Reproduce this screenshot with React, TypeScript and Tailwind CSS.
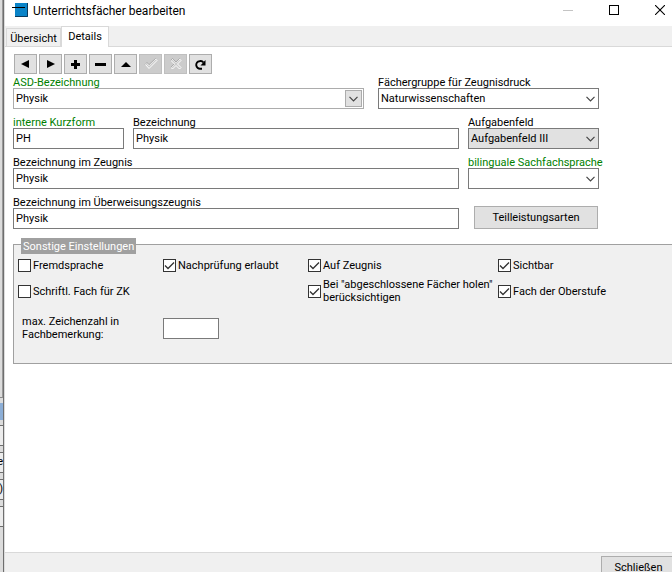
import type { ReactNode } from 'react'

const fieldClass =
  'h-[21px] w-full min-w-0 border border-[#7a7a7a] bg-white px-[2px] text-[11px] outline-none focus:border-[#0078d7]'

const buttonClass =
  'flex h-5 w-[23px] items-center justify-center border border-[#adadad] bg-[#e1e1e1] disabled:border-[#bfbfbf] disabled:bg-[#cccccc]'

function Field({
  id,
  label,
  green,
  className = '',
  children,
}: {
  id: string
  label: string
  green?: boolean
  className?: string
  children: ReactNode
}) {
  return (
    <div className={`flex min-w-0 flex-col ${className}`}>
      <label
        htmlFor={id}
        className={`h-[13px] whitespace-nowrap leading-[15px] ${green ? 'text-[#008000]' : ''}`}
      >
        {label}
      </label>
      {children}
    </div>
  )
}

function Chevron() {
  return (
    <svg width="9" height="6" viewBox="0 0 9 6" fill="none" stroke="#444" strokeWidth="1.2">
      <path d="M0.5 0.8 4.5 4.8 8.5 0.8" />
    </svg>
  )
}

function Combo({
  id,
  options,
  variant = 'plain',
}: {
  id: string
  options: string[]
  variant?: 'plain' | 'grey' | 'boxed'
}) {
  return (
    <div className="relative">
      <select
        id={id}
        className={`h-[21px] w-full appearance-none border px-[2px] pt-px text-[11px] outline-none ${
          variant === 'boxed' ? 'border-[#acacac]' : 'border-[#7a7a7a]'
        } ${variant === 'grey' ? 'bg-[#e1e1e1]' : 'bg-white'}`}
      >
        {options.map((o) => (
          <option key={o}>{o}</option>
        ))}
      </select>
      <span
        className={`pointer-events-none absolute flex items-center justify-center ${
          variant === 'boxed'
            ? 'inset-y-[2px] right-[2px] w-[17px] border border-[#acacac] bg-[#e1e1e1]'
            : 'inset-y-0 right-1 w-[9px]'
        }`}
      >
        <Chevron />
      </span>
    </div>
  )
}

function Check({ label, checked, className = '' }: { label: string; checked?: boolean; className?: string }) {
  return (
    <label className={`flex h-[26px] items-center gap-[2px] leading-[13px] ${className}`}>
      <span className="grid shrink-0">
        <input
          type="checkbox"
          defaultChecked={checked}
          className="peer col-start-1 row-start-1 size-[13px] appearance-none border border-[#333] bg-white"
        />
        <svg
          viewBox="0 0 13 13"
          fill="none"
          stroke="#333"
          strokeWidth="1.3"
          className="pointer-events-none invisible col-start-1 row-start-1 size-[13px] peer-checked:visible"
        >
          <path d="M2 6.5 5 9.5 11 3.5" />
        </svg>
      </span>
      <span className="whitespace-pre">{label}</span>
    </label>
  )
}

function TitleBar() {
  return (
    <header className="flex h-[26px] shrink-0 items-start bg-white pl-[7px]">
      <svg width="16" height="16" viewBox="0 0 16 16" className="mt-[2px]">
        <rect x="3" y="1" width="13" height="14" fill="#0a84c8" />
        <path d="M3 14.5h12.5V1" stroke="#0b3a5c" fill="none" />
        <path d="M0 5.5h13" stroke="#000" />
      </svg>
      <h1 className="ml-[5px] flex-1 text-[12px] leading-[22px]">Unterrichtsfächer bearbeiten</h1>
      <button type="button" aria-label="Minimieren" className="flex h-5 w-[46px] items-center justify-center">
        <svg width="10" height="10" viewBox="0 0 10 10">
          <path d="M0 5.5h10" stroke="#c4c4c4" />
        </svg>
      </button>
      <button type="button" aria-label="Maximieren" className="flex h-5 w-[46px] items-center justify-center">
        <svg width="10" height="10" viewBox="0 0 10 10">
          <rect x="0.5" y="0.5" width="9" height="9" fill="none" stroke="#000" />
        </svg>
      </button>
      <button type="button" aria-label="Schließen" className="-mr-[11px] flex h-5 w-[46px] items-center justify-center">
        <svg width="10" height="10" viewBox="0 0 10 10">
          <path d="M0 0 10 10M10 0 0 10" stroke="#000" strokeWidth="1.1" />
        </svg>
      </button>
    </header>
  )
}

function Toolbar() {
  return (
    <div className="flex gap-[2px] pl-px">
      <button type="button" aria-label="Zurück" className={buttonClass}>
        <svg width="9" height="8" viewBox="0 0 9 8">
          <path d="M0 4 8 0v8z" />
        </svg>
      </button>
      <button type="button" aria-label="Weiter" className={buttonClass}>
        <svg width="9" height="8" viewBox="0 0 9 8">
          <path d="M9 4 1 0v8z" />
        </svg>
      </button>
      <button type="button" aria-label="Hinzufügen" className={buttonClass}>
        <svg width="9" height="9" viewBox="0 0 9 9">
          <path d="M3 0h3v3h3v3H6v3H3V6H0V3h3z" />
        </svg>
      </button>
      <button type="button" aria-label="Löschen" className={buttonClass}>
        <svg width="11" height="3" viewBox="0 0 11 3">
          <path d="M0 0h11v3H0z" />
        </svg>
      </button>
      <button type="button" aria-label="Bearbeiten" className={buttonClass}>
        <svg width="10" height="5" viewBox="0 0 10 5">
          <path d="M0 5 5 0l5 5z" />
        </svg>
      </button>
      <button type="button" aria-label="Speichern" disabled className={buttonClass}>
        <svg width="14" height="12" viewBox="0 0 14 12" fill="none">
          <path d="m1.5 6.5 3.5 4 8-8L11.500 1 5 7.500 2.500 5z" stroke="#fff" />
          <path d="M1 6.500 3 4.500l2 2.200L11.500 0.500" stroke="#9c9c9c" strokeWidth="0.8" />
        </svg>
      </button>
      <button type="button" aria-label="Abbrechen" disabled className={buttonClass}>
        <svg width="12" height="12" viewBox="0 0 12 12" fill="none">
          <path
            d="m1 2.500 1.500-1.500L6 4.500 9.500 1 11 2.500 7.500 6 11 9.500 9.500 11 6 7.500 2.500 11 1 9.500 4.500 6z"
            stroke="#fff"
          />
          <path d="M0.500 2.500 2.500 0.500 6 4l3.500-3.500M4 6 0.500 9.500" stroke="#9c9c9c" strokeWidth="0.8" />
        </svg>
      </button>
      <button type="button" aria-label="Aktualisieren" className={buttonClass}>
        <svg width="11" height="11" viewBox="0 0 11 11">
          <path
            d="M7 9.700H5.500A3.700 3.700 0 0 1 4.500 2.200C6 1.700 7.500 2.200 8.500 3.500"
            fill="none"
            stroke="#000"
            strokeWidth="1.9"
          />
          <path d="M10.500 1v5.500H5.500z" />
        </svg>
      </button>
    </div>
  )
}

// sliver of the parent window that stays visible behind the dialog
function Backdrop() {
  return (
    <div aria-hidden="true" className="flex w-1 shrink-0 flex-col overflow-hidden border-r border-[#6e6e6e] bg-[#dcdcdc]">
      <div className="h-[398px] shrink-0 border-r border-b border-r-[#9a9a9a] border-b-[#8a8a8a]" />
      <div className="h-[5px] shrink-0" />
      <div className="h-[17px] shrink-0 bg-[#8caed6]" />
      <div className="mt-[5px] h-[21px] shrink-0 border-y border-[#6e6e6e] bg-[#ececec]" />
      <div className="mt-[6px] flex h-[21px] shrink-0 items-center justify-end border-y border-[#6e6e6e] bg-[#ececec]">e</div>
      <div className="mt-[6px] flex h-[21px] shrink-0 items-center justify-end border-y border-[#6e6e6e] bg-[#ececec]">)</div>
      <div className="mt-[6px] h-[21px] shrink-0 border-y border-[#6e6e6e] bg-[#ececec]" />
    </div>
  )
}

export default function App() {
  return (
    <div className="flex h-screen overflow-hidden bg-white font-['Roboto',sans-serif] text-[11px] text-black">
      <Backdrop />
      <div className="flex min-w-0 flex-1 flex-col border-l border-[#dcdcdc]">
        <TitleBar />

        <div role="tablist" className="flex h-[21px] shrink-0 items-end border-b border-[#d9d9d9] bg-[#f0f0f0] pl-px">
          <button
            type="button"
            role="tab"
            aria-selected="false"
            className="h-[18px] w-[55px] border border-b-0 border-[#d9d9d9] pt-px leading-[17px]"
          >
            Übersicht
          </button>
          <button
            type="button"
            role="tab"
            aria-selected="true"
            className="-mb-px h-[21px] w-12 border border-b-0 border-[#d9d9d9] bg-white"
          >
            Details
          </button>
        </div>

        <main className="flex-1 pt-[7px] pl-2">
          <Toolbar />

          <form className="mt-px flex flex-col gap-[6px] pr-[73px]">
            <div className="flex gap-[14px]">
              <Field id="asd" label="ASD-Bezeichnung" green className="flex-1">
                <Combo id="asd" options={['Physik']} variant="boxed" />
              </Field>
              <Field id="gruppe" label="Fächergruppe für Zeugnisdruck" className="w-[221px]">
                <Combo id="gruppe" options={['Naturwissenschaften']} />
              </Field>
            </div>

            <div className="flex gap-[9px]">
              <Field id="kurz" label="interne Kurzform" green className="w-[111px]">
                <input id="kurz" defaultValue="PH" className={fieldClass} />
              </Field>
              <Field id="bez" label="Bezeichnung" className="flex-1">
                <input id="bez" defaultValue="Physik" className={fieldClass} />
              </Field>
              <Field id="feld" label="Aufgabenfeld" className="w-[131px]">
                <Combo id="feld" options={['Aufgabenfeld III']} variant="grey" />
              </Field>
            </div>

            <div className="flex gap-[9px]">
              <Field id="zeugnis" label="Bezeichnung im Zeugnis" className="flex-1">
                <input id="zeugnis" defaultValue="Physik" className={fieldClass} />
              </Field>
              <Field id="bili" label="bilinguale Sachfachsprache" green className="w-[131px]">
                <Combo id="bili" options={['']} />
              </Field>
            </div>

            <div className="flex items-end gap-[15px]">
              <Field id="ueberweisung" label="Bezeichnung im Überweisungszeugnis" className="flex-1">
                <input id="ueberweisung" defaultValue="Physik" className={fieldClass} />
              </Field>
              <button type="button" className="mr-px h-[23px] w-[124px] border border-[#adadad] bg-[#e1e1e1] pt-[2px]">
                Teilleistungsarten
              </button>
            </div>
          </form>

          <fieldset className="relative -mr-px mt-[15px] h-[120px] border border-[#a0a0a0] bg-[#f0f0f0] pt-[7px] pl-1">
            <legend className="absolute -top-[7px] left-[7px] h-4 whitespace-nowrap bg-[#a0a0a0] px-[2px] leading-[17px] text-white">
              Sonstige Einstellungen
            </legend>
            <div className="grid grid-cols-[145px_145px_190px_1fr]">
              <Check label="Fremdsprache" />
              <Check label="Nachprüfung erlaubt" checked />
              <Check label="Auf Zeugnis" checked />
              <Check label="Sichtbar" checked />
              <Check label="Schriftl. Fach für ZK" className="col-span-2" />
              <Check label={'Bei "abgeschlossene Fächer holen"\nberücksichtigen'} checked />
              <Check label="Fach der Oberstufe" checked />
            </div>
            <div className="mt-[11px] grid grid-cols-[145px_56px] items-center">
              <label htmlFor="zeichen" className="pl-1 leading-[13px]">
                max. Zeichenzahl in
                <br />
                Fachbemerkung:
              </label>
              <input id="zeichen" className={fieldClass} />
            </div>
          </fieldset>
        </main>

        <footer className="flex h-5 shrink-0 justify-end border-t border-[#d9d9d9] bg-[#f0f0f0] pt-[3px]">
          <button type="button" className="-mr-1 h-[25px] w-[75px] shrink-0 border border-[#adadad] bg-[#e1e1e1]">
            Schließen
          </button>
        </footer>
      </div>
    </div>
  )
}
